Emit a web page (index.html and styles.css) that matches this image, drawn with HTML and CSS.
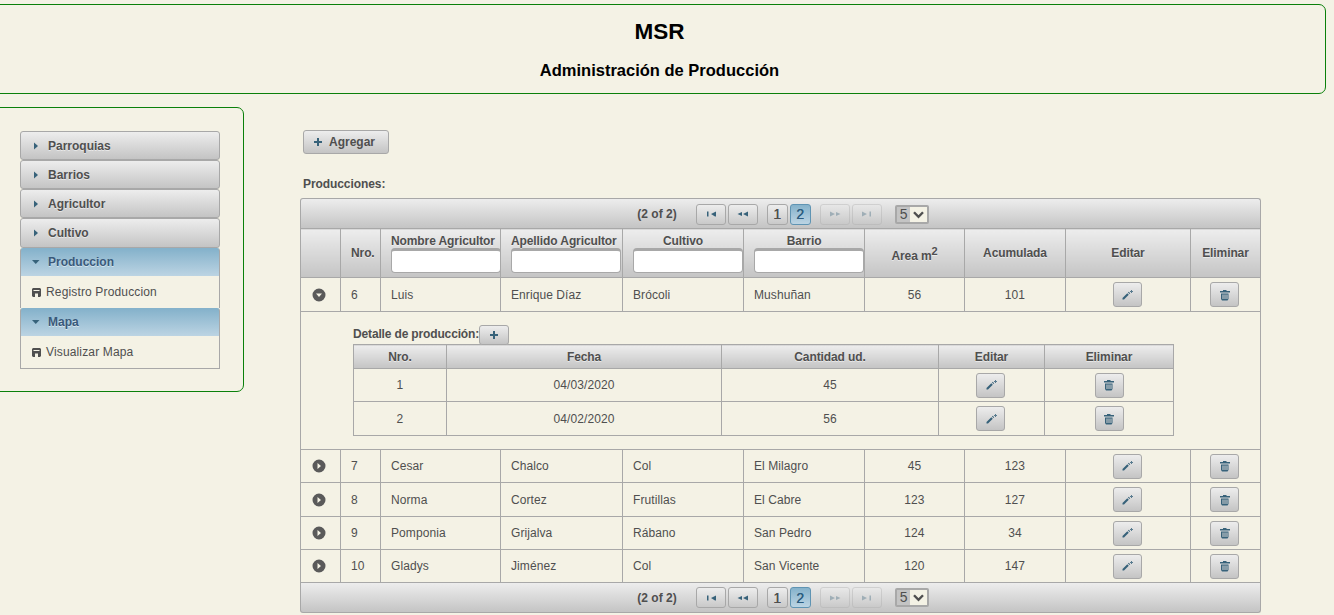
FILE: index.html
```html
<!DOCTYPE html>
<html lang="es">
	<head>
		<meta charset="utf-8">
		<title>MSR - Administración de Producción</title>
		<link rel="stylesheet" href="styles.css">
	</head>

	<body>
		<svg class="defs" width="0" height="0">
			<symbol id="i-right" viewBox="0 0 16 16"><path d="M6 4.500l4 3.500-4 3.500z"/></symbol>
			<symbol id="i-down" viewBox="0 0 16 16"><path d="M4 6h7.500L7.750 10z"/></symbol>
			<symbol id="i-plus" viewBox="0 0 16 16"><path d="M7 4h2v3h3v2H9v3H7V9H4V7h3z"/></symbol>
			<symbol id="i-disk" viewBox="0 0 9 9"><path fill-rule="evenodd" d="M1 0h7l1 1v7l-1 1H1L0 8V1zM1.500 2v1h6V2zM3 5.500V9h3V5.500z"/></symbol>
			<symbol id="i-pencil" viewBox="0 0 16 16"><path d="M3.500 12.500v-1.500l4.800-4.800 1.500 1.500L5 12.500zM9 5.500l.7-.7 1.500 1.500-.7.700z"/><path d="M12 3h1v1h1v1h-1v1h-1V5h-1V4h1z" opacity=".8"/></symbol>
			<symbol id="i-trash" viewBox="0 0 16 16"><path fill-rule="evenodd" d="M6 3h3.500v1H13v1.500H3V4h3zM4 6.500h7.500V12l-1 1.500H5L4 12zM5.500 7.500V12h1V7.500zm2 0V12h1V7.500zm2 0V12h1V7.500z"/></symbol>
			<symbol id="i-first" viewBox="0 0 16 16"><path d="M4 5.500h1.500v5H4zM13 5.500v5H12L8 8z"/></symbol>
			<symbol id="i-prev" viewBox="0 0 16 16"><path d="M7 6v4L2.500 8zM13 5.500v5L8 8z"/></symbol>
			<symbol id="i-next" viewBox="0 0 16 16"><path d="M3 5.500v5L8 8zM9 6v4l4.500-2z"/></symbol>
			<symbol id="i-last" viewBox="0 0 16 16"><path d="M3 5.500v5L8 8zM10.500 5.500H12v5h-1.500z"/></symbol>
			<symbol id="i-open" viewBox="0 0 16 16"><path fill-rule="evenodd" d="M8 1.500a6.500 6.500 0 1 1 0 13 6.500 6.500 0 0 1 0-13zM5 6.500L8 10l3-3.500z"/></symbol>
			<symbol id="i-closed" viewBox="0 0 16 16"><path fill-rule="evenodd" d="M8 1.500a6.500 6.500 0 1 1 0 13 6.500 6.500 0 0 1 0-13zM6.500 5v6L10 8z"/></symbol>
		</svg>

		<header class="banner">
			<h1>MSR</h1>
			<h2>Administración de Producción</h2>
		</header>

		<div class="layout">
			<aside class="sidebar">
				<div class="accordion">
					<div class="acc-head"><svg class="icon"><use href="#i-right"/></svg>Parroquias</div>
					<div class="acc-head"><svg class="icon"><use href="#i-right"/></svg>Barrios</div>
					<div class="acc-head"><svg class="icon"><use href="#i-right"/></svg>Agricultor</div>
					<div class="acc-head tall"><svg class="icon"><use href="#i-right"/></svg>Cultivo</div>
					<div class="acc-head active"><svg class="icon"><use href="#i-down"/></svg>Produccion</div>
					<div class="acc-panel"><svg class="disk"><use href="#i-disk"/></svg>Registro Produccion</div>
					<div class="acc-head active"><svg class="icon"><use href="#i-down"/></svg>Mapa</div>
					<div class="acc-panel"><svg class="disk"><use href="#i-disk"/></svg>Visualizar Mapa</div>
				</div>
			</aside>

			<main class="main">
				<button class="btn btn-add"><svg class="icon"><use href="#i-plus"/></svg>Agregar</button>
				<div class="section-title">Producciones:</div>

				<div class="datatable">
					<div class="paginator top">
						<span class="page-count">(2 of 2)</span>
						<span class="page-group">
							<span class="page-btn"><svg class="icon"><use href="#i-first"/></svg></span>
							<span class="page-btn"><svg class="icon"><use href="#i-prev"/></svg></span>
						</span>
						<span class="page-group">
							<span class="page-num">1</span>
							<span class="page-num current">2</span>
						</span>
						<span class="page-group">
							<span class="page-btn disabled"><svg class="icon"><use href="#i-next"/></svg></span>
							<span class="page-btn disabled"><svg class="icon"><use href="#i-last"/></svg></span>
						</span>
						<span class="page-size"><b>5</b><i><svg viewBox="0 0 10 10"><path d="M2 3.500l3 3 3-3" /></svg></i></span>
					</div>

					<table class="grid">
						<colgroup>
							<col class="c40"><col class="c40"><col class="c120"><col class="c122"><col class="c121"><col class="c121"><col class="c100"><col class="c101"><col class="c125"><col class="c70">
						</colgroup>
						<thead>
							<tr>
								<th></th>
								<th>Nro.</th>
								<th class="filter">Nombre Agricultor<input type="text"></th>
								<th class="filter">Apellido Agricultor<input type="text"></th>
								<th class="filter">Cultivo<input type="text"></th>
								<th class="filter">Barrio<input type="text"></th>
								<th class="area">Area m<sup>2</sup></th>
								<th>Acumulada</th>
								<th>Editar</th>
								<th>Eliminar</th>
							</tr>
						</thead>
						<tbody>
							<tr class="h34">
								<td class="toggle"><svg class="icon"><use href="#i-open"/></svg></td>
								<td>6</td><td>Luis</td><td>Enrique Díaz</td><td>Brócoli</td><td>Mushuñan</td>
								<td class="center">56</td><td class="center">101</td>
								<td class="center"><button class="btn btn-icon"><svg class="icon"><use href="#i-pencil"/></svg></button></td>
								<td class="center"><button class="btn btn-icon"><svg class="icon"><use href="#i-trash"/></svg></button></td>
							</tr>
							<tr>
								<td class="expansion" colspan="10">
									<div class="detail-title">Detalle de producción:<button class="btn btn-small"><svg class="icon"><use href="#i-plus"/></svg></button></div>
									<table class="grid nested">
										<colgroup>
											<col class="c93"><col class="c275"><col class="c217"><col class="c106"><col class="c129">
										</colgroup>
										<thead>
											<tr><th>Nro.</th><th>Fecha</th><th>Cantidad ud.</th><th>Editar</th><th>Eliminar</th></tr>
										</thead>
										<tbody>
											<tr class="h33">
												<td class="center">1</td><td class="center">04/03/2020</td><td class="center">45</td>
												<td class="center"><button class="btn btn-icon"><svg class="icon"><use href="#i-pencil"/></svg></button></td>
												<td class="center"><button class="btn btn-icon"><svg class="icon"><use href="#i-trash"/></svg></button></td>
											</tr>
											<tr class="h34">
												<td class="center">2</td><td class="center">04/02/2020</td><td class="center">56</td>
												<td class="center"><button class="btn btn-icon"><svg class="icon"><use href="#i-pencil"/></svg></button></td>
												<td class="center"><button class="btn btn-icon"><svg class="icon"><use href="#i-trash"/></svg></button></td>
											</tr>
										</tbody>
									</table>
								</td>
							</tr>
							<tr class="h33">
								<td class="toggle"><svg class="icon"><use href="#i-closed"/></svg></td>
								<td>7</td><td>Cesar</td><td>Chalco</td><td>Col</td><td>El Milagro</td>
								<td class="center">45</td><td class="center">123</td>
								<td class="center"><button class="btn btn-icon"><svg class="icon"><use href="#i-pencil"/></svg></button></td>
								<td class="center"><button class="btn btn-icon"><svg class="icon"><use href="#i-trash"/></svg></button></td>
							</tr>
							<tr class="h34">
								<td class="toggle"><svg class="icon"><use href="#i-closed"/></svg></td>
								<td>8</td><td>Norma</td><td>Cortez</td><td>Frutillas</td><td>El Cabre</td>
								<td class="center">123</td><td class="center">127</td>
								<td class="center"><button class="btn btn-icon"><svg class="icon"><use href="#i-pencil"/></svg></button></td>
								<td class="center"><button class="btn btn-icon"><svg class="icon"><use href="#i-trash"/></svg></button></td>
							</tr>
							<tr class="h33">
								<td class="toggle"><svg class="icon"><use href="#i-closed"/></svg></td>
								<td>9</td><td>Pomponia</td><td>Grijalva</td><td>Rábano</td><td>San Pedro</td>
								<td class="center">124</td><td class="center">34</td>
								<td class="center"><button class="btn btn-icon"><svg class="icon"><use href="#i-pencil"/></svg></button></td>
								<td class="center"><button class="btn btn-icon"><svg class="icon"><use href="#i-trash"/></svg></button></td>
							</tr>
							<tr class="h33">
								<td class="toggle"><svg class="icon"><use href="#i-closed"/></svg></td>
								<td>10</td><td>Gladys</td><td>Jiménez</td><td>Col</td><td>San Vicente</td>
								<td class="center">120</td><td class="center">147</td>
								<td class="center"><button class="btn btn-icon"><svg class="icon"><use href="#i-pencil"/></svg></button></td>
								<td class="center"><button class="btn btn-icon"><svg class="icon"><use href="#i-trash"/></svg></button></td>
							</tr>
						</tbody>
					</table>

					<div class="paginator bottom">
						<span class="page-count">(2 of 2)</span>
						<span class="page-group">
							<span class="page-btn"><svg class="icon"><use href="#i-first"/></svg></span>
							<span class="page-btn"><svg class="icon"><use href="#i-prev"/></svg></span>
						</span>
						<span class="page-group">
							<span class="page-num">1</span>
							<span class="page-num current">2</span>
						</span>
						<span class="page-group">
							<span class="page-btn disabled"><svg class="icon"><use href="#i-next"/></svg></span>
							<span class="page-btn disabled"><svg class="icon"><use href="#i-last"/></svg></span>
						</span>
						<span class="page-size"><b>5</b><i><svg viewBox="0 0 10 10"><path d="M2 3.500l3 3 3-3" /></svg></i></span>
					</div>
				</div>
			</main>
		</div>
	</body>
</html>
```

FILE: styles.css
```css
/* general styling */
* {
	box-sizing: border-box;
}

html, body {
	margin: 0;
	padding: 0;
	overflow: hidden;
}

body {
	background-color: #f4f2e5;
	color: #4f4f4f;
	font-family: "Liberation Sans", Arial, sans-serif;
	font-size: 12px;
	height: 615px;
}

.defs {
	display: block;
	height: 0;
}

.icon {
	display: block;
	fill: #37627a;
	height: 16px;
	width: 16px;
}

/* header */
.banner {
	border: 1px solid #0a800a;
	border-radius: 7px;
	height: 90px;
	margin: 4px 8px 0 -7px;
	text-align: center;
	color: #000;
}

.banner h1 {
	font-size: 22.5px;
	line-height: 28px;
	margin: 13px 0 0;
}

.banner h2 {
	font-size: 16.5px;
	line-height: 20px;
	margin: 14px 0 0;
}

.layout {
	display: flex;
	align-items: flex-start;
	margin-top: 13px;
}

/* side menu */
.sidebar {
	border: 1px solid #0a800a;
	border-radius: 7px;
	flex: none;
	height: 285px;
	margin-left: -10px;
	padding: 23px 23px 0 29px;
	width: 254px;
}

.acc-head {
	align-items: center;
	background: linear-gradient(#ededed, #c4c4c4);
	border: 1px solid #a8a8a8;
	border-radius: 3px;
	display: flex;
	font-weight: bold;
	height: 29px;
	padding-left: 7px;
	text-shadow: 0 1px 0 rgba(255, 255, 255, .5);
}

.acc-head.tall {
	height: 30px;
}

.acc-head .icon {
	margin-right: 4px;
}

.acc-head.active {
	background: linear-gradient(#85b2cb, #bcd4e3);
	border-color: #85b2cb #a8a8a8 #a8a8a8;
	border-radius: 3px 3px 0 0;
	border-bottom: 0;
	color: #39597a;
	height: 28px;
	padding-bottom: 2px;
}

.acc-panel {
	align-items: center;
	border: solid #a8a8a8;
	border-width: 0 1px;
	display: flex;
	height: 32px;
	letter-spacing: .15px;
	padding-left: 11px;
}

.acc-panel:last-child {
	border-bottom-width: 1px;
	height: 33px;
}

.disk {
	display: block;
	fill: #4f4f4f;
	height: 9px;
	margin-right: 5px;
	width: 9px;
}

/* buttons */
.btn {
	background: linear-gradient(#ededed, #c4c4c4);
	border: 1px solid #a8a8a8;
	border-radius: 3px;
	color: #4f4f4f;
	font-family: inherit;
	font-size: 12px;
	font-weight: bold;
	padding: 0;
	align-items: center;
	display: inline-flex;
	justify-content: center;
	vertical-align: middle;
}

.btn-add {
	display: flex;
	height: 24px;
	justify-content: flex-start;
	margin-left: 3px;
	padding-left: 6px;
	width: 86px;
}

.btn-add .icon {
	margin-right: 3px;
}

.btn-icon {
	height: 25px;
	margin-right: 2px;
	width: 29px;
}

.nested td:last-child .btn-icon {
	margin-right: 0;
}

.btn-small {
	height: 20px;
	width: 30px;
}

/* main column */
.main {
	margin-left: 56px;
	width: 961px;
	padding-top: 23px;
}

.section-title {
	font-weight: bold;
	letter-spacing: -.08px;
	line-height: 14px;
	margin: 23px 0 7px 3px;
}

/* paginator */
.paginator {
	align-items: center;
	background: linear-gradient(#ededed, #c4c4c4);
	border: 1px solid #a8a8a8;
	display: flex;
	height: 30px;
	justify-content: center;
	gap: 9px;
	padding-left: 5px;
}

.paginator.top {
	border-radius: 3px 3px 0 0;
	border-bottom: 0;
	padding-top: 1px;
}

.paginator.bottom {
	border-radius: 0 0 3px 3px;
	border-top: 0;
}

.page-count {
	font-weight: bold;
	margin-right: 10px;
}

.page-group {
	display: flex;
	gap: 2px;
}

.page-btn, .page-num {
	align-items: center;
	background: linear-gradient(#ededed, #c9c9c9);
	border: 1px solid #a8a8a8;
	border-radius: 3px;
	display: flex;
	font-weight: bold;
	height: 21px;
	justify-content: center;
	width: 30px;
}

.page-num {
	font-size: 14px;
	font-weight: normal;
	text-shadow: .3px 0 0 currentColor;
	width: 21px;
}

.page-num.current {
	background: linear-gradient(#85b2cb, #bcd4e3);
	border-color: #5f94b3;
	color: #2c5d80;
}

.page-btn.disabled {
	opacity: .35;
}

.page-size {
	border: 2px solid #a8a8a8;
	border-radius: 2px;
	display: flex;
	height: 19px;
	margin-left: 4px;
	width: 34px;
}

.page-size b {
	background: #c4c4c4;
	flex: 1;
	font-size: 14px;
	font-weight: normal;
	line-height: 15px;
	padding-left: 3px;
}

.page-size i {
	background: #f4f2e5;
	display: block;
	width: 17px;
}

.page-size svg {
	fill: none;
	stroke: #4f4f4f;
	stroke-width: 1.6;
	display: block;
	height: 15px;
	margin: 0 auto;
	width: 15px;
}

/* tables */
.grid {
	border-collapse: collapse;
	table-layout: fixed;
	width: 961px;
}

.grid th, .grid td {
	border: 1px solid #a8a8a8;
	padding: 0 10px;
}

.grid td {
	height: 33px;
	letter-spacing: .08px;
}

.grid th {
	background: linear-gradient(#ededed, #c4c4c4);
	font-weight: bold;
	height: 49px;
	letter-spacing: -.1px;
	overflow: visible;
	text-align: center;
	text-shadow: 0 1px 0 rgba(255, 255, 255, .5);
	white-space: nowrap;
}

.grid .h33 td {
	height: 33px;
}

.grid .h34 td {
	height: 34px;
}

.grid th.filter {
	padding-top: 5px;
	vertical-align: top;
}

.grid th.filter input {
	background: #fff;
	border: 1px solid #a8a8a8;
	border-top: 3px solid #a8a8a8;
	border-radius: 4px;
	display: block;
	height: 25px;
	margin-top: 0;
	padding: 0;
	width: 110px;
}

.grid th.area {
	padding-top: 6px;
}

.grid sup {
	font-size: 11px;
	line-height: 0;
}

.grid .center {
	text-align: center;
}

.grid .toggle {
	padding: 0 3px 0 0;
}

.toggle .icon {
	fill: #5a5a5a;
	margin: 0 auto;
}

.c40 { width: 40px; }
.c70 { width: 70px; }
.c93 { width: 93px; }
.c100 { width: 100px; }
.c101 { width: 101px; }
.c106 { width: 106px; }
.c120 { width: 120px; }
.c121 { width: 121px; }
.c122 { width: 122px; }
.c125 { width: 125px; }
.c129 { width: 129px; }
.c217 { width: 217px; }
.c275 { width: 275px; }

/* row expansion */
.grid td.expansion {
	height: 138px;
	padding: 12px 0 13px 52px;
	vertical-align: top;
}

.detail-title {
	font-weight: bold;
	height: 20px;
	letter-spacing: -.15px;
	line-height: 20px;
}

.grid.nested {
	width: 821px;
}

.grid.nested th {
	height: 24px;
}
```
